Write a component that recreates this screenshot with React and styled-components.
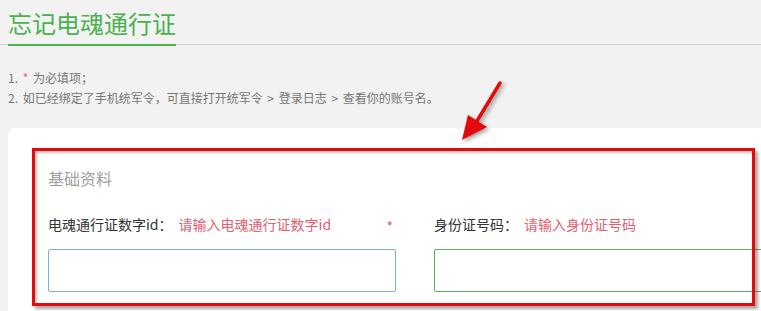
import styled, { createGlobalStyle } from 'styled-components';

const GlobalStyle = createGlobalStyle`
  html, body {
    margin: 0;
    padding: 0;
    background: #f2f2f2;
    overflow: hidden;
  }
  body {
    font-family: "Noto Sans CJK SC", "Noto Sans", sans-serif;
  }
`;

const Page = styled.div`
  position: relative;
  width: 761px;
  height: 311px;
  overflow: hidden;
  background: #f2f2f2;
`;

const Header = styled.div`
  height: 44px;
  padding-left: 8px;
  border-bottom: 1px solid #d3d3d3;
`;

const Title = styled.h1`
  display: inline-block;
  margin: 0 0 -2px 0;
  padding-top: 2px;
  height: 42px;
  line-height: 42px;
  font-size: 24px;
  font-weight: 400;
  color: #4cb14f;
  border-bottom: 2px solid #4cb14f;
`;

const Notes = styled.div`
  margin: 23px 0 0 8px;
  font-size: 12px;
  line-height: 20px;
  color: #777;
  word-spacing: 2px;
`;

const Req = styled.span`
  color: #e4606d;
`;

const Card = styled.div`
  margin: 20px 0 0 8px;
  width: 800px;
  height: 200px;
  background: #fff;
  border-radius: 8px 8px 0 0;
  padding: 38px 0 0 40px;
  box-sizing: border-box;
`;

const SectionTitle = styled.div`
  font-size: 16px;
  line-height: 24px;
  color: #a0a0a0;
`;

const Fields = styled.div`
  display: grid;
  grid-template-columns: 348px 348px;
  column-gap: 38px;
  margin-top: 24px;
`;

const Field = styled.div`
  display: flex;
  flex-direction: column;
`;

const LabelRow = styled.div`
  display: flex;
  align-items: center;
  height: 20px;
  font-size: 14px;
  color: #333;
  white-space: nowrap;
`;

const Hint = styled.span`
  color: #e4606d;
  margin-left: 6px;
`;

const Star = styled.span`
  color: #e4606d;
  margin-left: auto;
  margin-right: 3px;
  padding-top: 4px;
`;

const Input = styled.input`
  margin-top: 15px;
  height: 43px;
  box-sizing: border-box;
  border: 1px solid ${(p) => (p.$tone === 'green' ? '#5bb05d' : '#7eb0d6')};
  border-radius: 2px;
  background: #fff;
  outline: none;
  padding: 0 10px;
  font-size: 14px;
  font-family: inherit;
`;

const Highlight = styled.div`
  position: absolute;
  left: 32px;
  top: 148px;
  width: 723px;
  height: 158px;
  box-sizing: border-box;
  border: 3px solid #e20a0a;
  box-shadow: 3px 3px 3px rgba(0, 0, 0, 0.35), inset 2px 2px 3px rgba(0, 0, 0, 0.25);
  pointer-events: none;
`;

const Arrow = styled.svg`
  position: absolute;
  left: 450px;
  top: 75px;
  width: 60px;
  height: 75px;
  overflow: visible;
  filter: drop-shadow(2px 2px 2px rgba(0, 0, 0, 0.4));
  pointer-events: none;
`;

function App() {
  return (
    <Page>
      <GlobalStyle />
      <Header>
        <Title>忘记电魂通行证</Title>
      </Header>
      <Notes>
        <div>
          1. <Req>*</Req> 为必填项；
        </div>
        <div>2. 如已经绑定了手机统军令，可直接打开统军令 &gt; 登录日志 &gt; 查看你的账号名。</div>
      </Notes>
      <Card>
        <SectionTitle>基础资料</SectionTitle>
        <Fields>
          <Field>
            <LabelRow>
              电魂通行证数字id：<Hint>请输入电魂通行证数字id</Hint>
              <Star>*</Star>
            </LabelRow>
            <Input />
          </Field>
          <Field>
            <LabelRow>
              身份证号码：<Hint>请输入身份证号码</Hint>
            </LabelRow>
            <Input $tone="green" />
          </Field>
        </Fields>
      </Card>
      <Highlight />
      <Arrow viewBox="450 75 60 75">
        <line x1="500" y1="83" x2="474" y2="126" stroke="#e20a0a" strokeWidth="3.5" strokeLinecap="round" />
        <polygon points="462,140 468,115 487,127" fill="#e20a0a" />
      </Arrow>
    </Page>
  );
}

export default App;
